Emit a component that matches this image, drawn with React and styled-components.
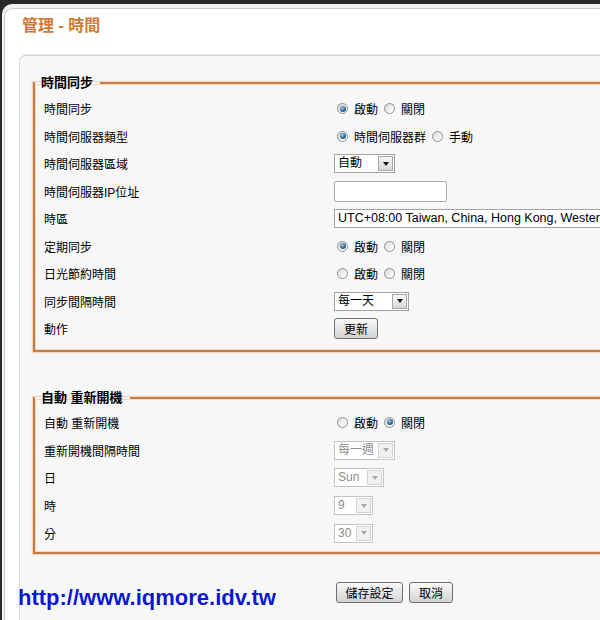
import React from "react";
import styled, { createGlobalStyle } from "styled-components";

const GlobalStyle = createGlobalStyle`
  * {
    margin: 0;
    padding: 0;
  }

  html, body {
    height: 100%;
  }

  body {
    background: #282828;
    overflow: hidden;
    font-family: "Liberation Sans", "Noto Sans CJK TC", sans-serif;
    font-size: 12px;
    color: #000;
  }
`;

const Page = styled.div`
  position: relative;
  width: 780px;
  height: 620px;
`;

const Frame = styled.div`
  margin: 4px 0 0 2px;
  padding: 4px 0 0 2px;
  height: 612px;
  background: #f2f2f2;
  border-top-left-radius: 10px;
`;

const Panel = styled.div`
  height: 100%;
  box-sizing: border-box;
  background: #fff;
  border: 1px solid #c9c9c9;
  border-right: none;
  border-bottom: none;
  border-top-left-radius: 9px;
`;

const Header = styled.div`
  height: 46px;
  box-sizing: border-box;
  padding: 8px 0 0 17px;
`;

const Title = styled.h1`
  font-family: "Liberation Sans", "Noto Sans CJK TC", sans-serif;
  font-size: 16px;
  line-height: 18px;
  font-weight: bold;
  color: #cd7c36;
`;

const Inner = styled.div`
  margin-left: 14px;
  height: 570px;
  box-sizing: border-box;
  padding: 19px 0 0 13px;
  background: #f7f7f7;
  border-top: 1px solid #d2d2d2;
  border-left: 1px solid #dcdcdc;
  border-top-left-radius: 7px;
  box-shadow: 0 -1px 1px rgba(0, 0, 0, 0.07);
`;

const Group = styled.fieldset`
  margin: ${(p) => (p.$first ? "0" : "38px")} 0 0 0;
  padding: ${(p) => (p.$first ? "4px 0 7px" : "3px 0 5px")};
  border: 2px solid #c27d47;
  box-shadow: 0 0 1px 1px rgba(238, 186, 140, 0.55),
    inset 0 0 1px 1px rgba(238, 186, 140, 0.55);
  min-width: 0;
`;

const Legend = styled.legend`
  padding: 0 7px 0 6px;
  font-size: 13px;
  line-height: 16px;
  font-weight: bold;
`;

const Row = styled.div`
  display: grid;
  grid-template-columns: 290px 1fr;
  align-items: center;
  height: ${(p) => p.$h}px;
  padding-left: 9px;
`;

const Label = styled.span`
  white-space: nowrap;
`;

const Control = styled.div`
  display: flex;
  align-items: center;
  white-space: nowrap;
`;

const RadioGroup = styled.div`
  display: flex;
  align-items: center;
  gap: 6px;
  margin-left: 3px;
`;

const RadioItem = styled.label`
  display: flex;
  align-items: center;
  gap: 6px;
`;

const RadioDot = styled.span`
  position: relative;
  width: 11px;
  height: 11px;
  box-sizing: border-box;
  border-radius: 50%;
  border: 1px solid #909090;
  background: linear-gradient(135deg, #d4d4d4, #f9f9f9 70%);

  &::after {
    content: "";
    display: ${(p) => (p.$checked ? "block" : "none")};
    position: absolute;
    left: 1.5px;
    top: 1.5px;
    width: 6px;
    height: 6px;
    border-radius: 50%;
    background: radial-gradient(circle at 40% 35%, #a6d0ee, #2b6698 55%, #0f3558);
  }
`;

const SelectBox = styled.div`
  display: inline-flex;
  box-sizing: border-box;
  width: ${(p) => p.$width}px;
  height: 19px;
  border: 1px solid ${(p) => (p.$disabled ? "#c4c4c4" : "#a3a3a3")};
  background: #fff;
  color: ${(p) => (p.$disabled ? "#8e8e8e" : "#000")};
  font-size: ${(p) => p.$size || 12}px;
`;

const SelectValue = styled.span`
  flex: 1;
  padding-left: 3px;
  line-height: 17px;
  white-space: nowrap;
  overflow: hidden;
`;

const SelectArrow = styled.span`
  flex: none;
  width: 15px;
  margin: 1px;
  box-sizing: border-box;
  border: 1px solid ${(p) => (p.$disabled ? "#d4d4d4" : "#a8a8a8")};
  background: ${(p) =>
    p.$disabled ? "#f1f1f1" : "linear-gradient(#f6f6f6, #d7d7d7)"};
  display: flex;
  align-items: center;
  justify-content: center;

  &::after {
    content: "";
    border-left: 3.5px solid transparent;
    border-right: 3.5px solid transparent;
    border-top: 4px solid ${(p) => (p.$disabled ? "#a8a8a8" : "#111")};
  }
`;

const TextInput = styled.input`
  width: 113px;
  height: 21px;
  box-sizing: border-box;
  border: 1px solid #a9a9a9;
  border-radius: 2px;
  background: #fff;
  outline: none;
`;

const Button = styled.button`
  height: 21px;
  width: ${(p) => p.$width}px;
  box-sizing: border-box;
  border: 1px solid #6f6f6f;
  border-radius: 3px;
  background: linear-gradient(#fafafa, #e6e6e6 50%, #d3d3d3);
  font-family: "Liberation Sans", "Noto Sans CJK TC", sans-serif;
  font-size: 12px;
  color: #000;
  cursor: pointer;
`;

const Actions = styled.div`
  display: flex;
  gap: 6px;
  margin-top: 28px;
  padding-left: 303px;
`;

const Watermark = styled.div`
  position: absolute;
  left: 18px;
  top: 581px;
  font-family: "Liberation Sans", sans-serif;
  font-size: 22px;
  line-height: 25px;
  font-weight: bold;
  color: #0c16d4;
  text-shadow: 0 0 2px #fff, 0 0 2px #fff, 0 0 3px #fff;
`;

const Radios = ({ items, checked }) => (
  <RadioGroup>
    {items.map((t, i) => (
      <RadioItem key={t}>
        <RadioDot $checked={i === checked} />
        {t}
      </RadioItem>
    ))}
  </RadioGroup>
);

const Select = ({ value, width, disabled, size }) => (
  <SelectBox $width={width} $disabled={disabled} $size={size}>
    <SelectValue>{value}</SelectValue>
    <SelectArrow $disabled={disabled} />
  </SelectBox>
);

const onOff = ["啟動", "關閉"];

const syncRows = [
  ["時間同步", <Radios items={onOff} checked={0} />],
  ["時間伺服器類型", <Radios items={["時間伺服器群", "手動"]} checked={0} />],
  ["時間伺服器區域", <Select value="自動" width={61} />],
  ["時間伺服器IP位址", <TextInput defaultValue="" />],
  ["時區", <Select value="UTC+08:00 Taiwan, China, Hong Kong, Western" width={300} size={12.5} />],
  ["定期同步", <Radios items={onOff} checked={0} />],
  ["日光節約時間", <Radios items={onOff} checked={-1} />],
  ["同步間隔時間", <Select value="每一天" width={75} />],
  ["動作", <Button $width={44}>更新</Button>],
];

const rebootRows = [
  ["自動 重新開機", <Radios items={onOff} checked={1} />],
  ["重新開機間隔時間", <Select value="每一週" width={61} disabled />],
  ["日", <Select value="Sun" width={50} disabled />],
  ["時", <Select value="9" width={39} disabled />],
  ["分", <Select value="30" width={39} disabled />],
];

const App = () => {
  return (
    <>
      <GlobalStyle />
      <Page>
        <Frame>
          <Panel>
            <Header>
              <Title>管理 - 時間</Title>
            </Header>
            <Inner>
              <Group $first>
                <Legend>時間同步</Legend>
                {syncRows.map(([label, control]) => (
                  <Row key={label} $h={27.5}>
                    <Label>{label}</Label>
                    <Control>{control}</Control>
                  </Row>
                ))}
              </Group>

              <Group>
                <Legend>自動 重新開機</Legend>
                {rebootRows.map(([label, control]) => (
                  <Row key={label} $h={27.75}>
                    <Label>{label}</Label>
                    <Control>{control}</Control>
                  </Row>
                ))}
              </Group>

              <Actions>
                <Button $width={67}>儲存設定</Button>
                <Button $width={44}>取消</Button>
              </Actions>
            </Inner>
          </Panel>
        </Frame>
        <Watermark>http://www.iqmore.idv.tw</Watermark>
      </Page>
    </>
  );
};

export default App;
